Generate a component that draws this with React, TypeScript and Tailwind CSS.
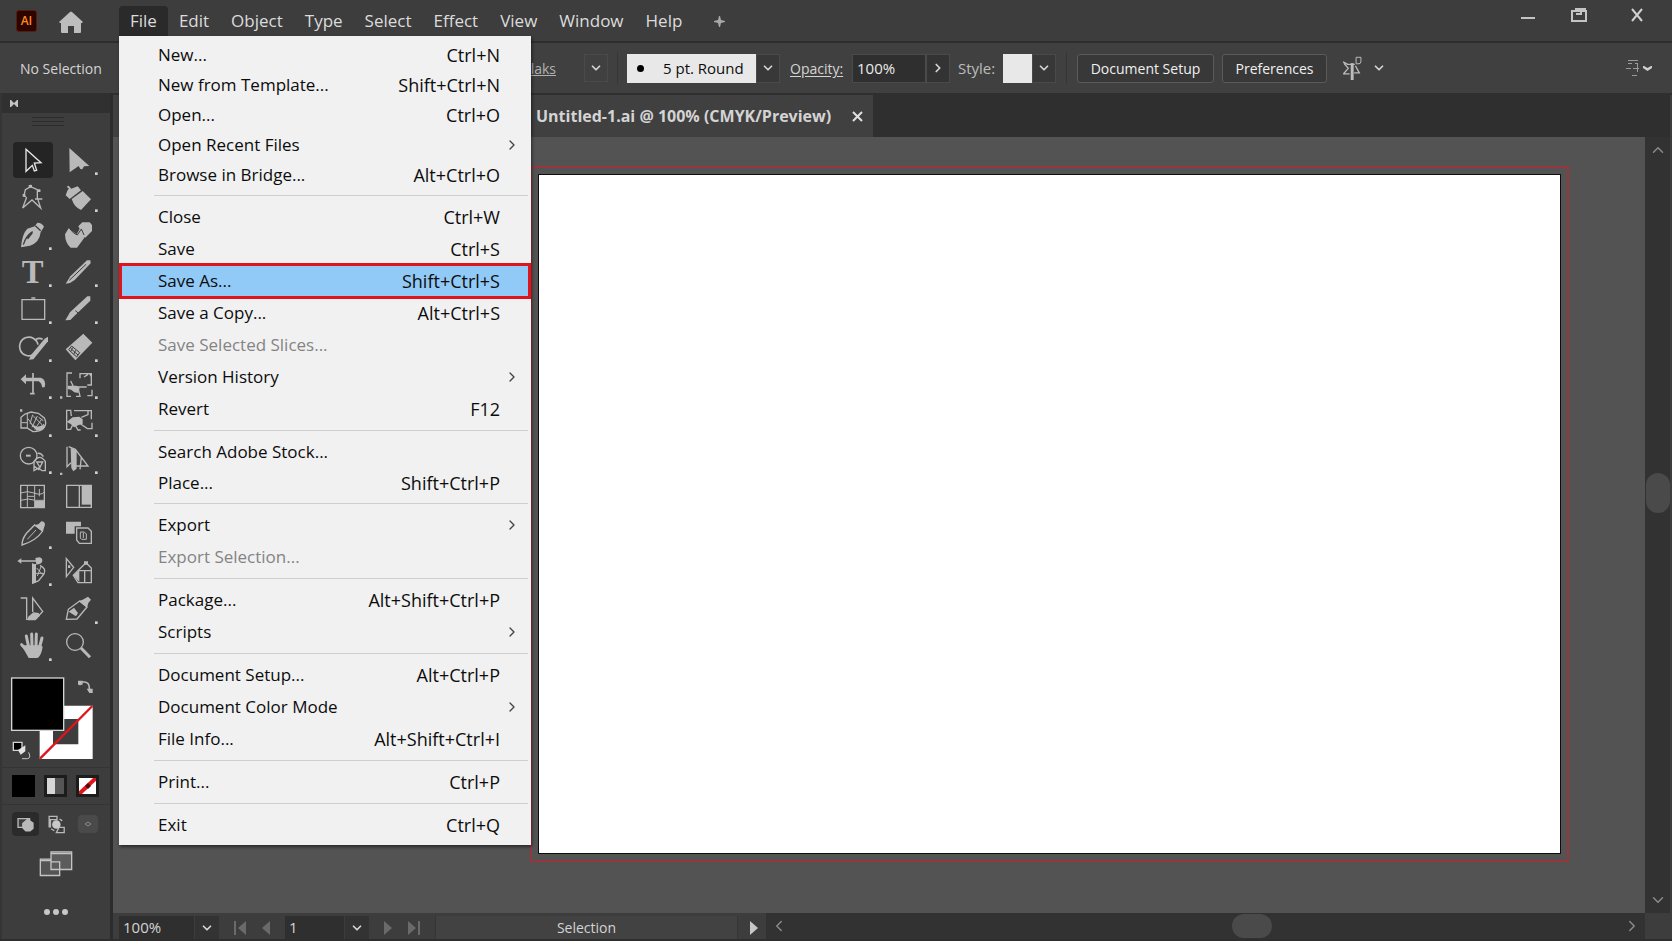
import type { ReactNode } from 'react';
import { ChevronDown, ChevronLeft, ChevronRight, ChevronUp } from 'lucide-react';
import clsx from 'clsx';

type MenuItem = {
  label: string;
  keys?: string;
  sub?: boolean;
  disabled?: boolean;
  active?: boolean;
};

type MenuGroup = {
  row: string;
  items: MenuItem[];
};

type Tool = {
  name: string;
  y: number; // top of the icon's own viewBox
  more?: boolean;
  selected?: boolean;
  art: ReactNode;
};

const menus = ['Edit', 'Object', 'Type', 'Select', 'Effect', 'View', 'Window', 'Help'];

const fileMenu: MenuGroup[] = [
  {
    row: 'h-[30px]',
    items: [
      { label: 'New...', keys: 'Ctrl+N' },
      { label: 'New from Template...', keys: 'Shift+Ctrl+N' },
      { label: 'Open...', keys: 'Ctrl+O' },
      { label: 'Open Recent Files', sub: true },
      { label: 'Browse in Bridge...', keys: 'Alt+Ctrl+O' },
    ],
  },
  {
    row: 'h-8',
    items: [
      { label: 'Close', keys: 'Ctrl+W' },
      { label: 'Save', keys: 'Ctrl+S' },
      { label: 'Save As...', keys: 'Shift+Ctrl+S', active: true },
      { label: 'Save a Copy...', keys: 'Alt+Ctrl+S' },
      { label: 'Save Selected Slices...', disabled: true },
      { label: 'Version History', sub: true },
      { label: 'Revert', keys: 'F12' },
    ],
  },
  {
    row: 'h-[31px]',
    items: [{ label: 'Search Adobe Stock...' }, { label: 'Place...', keys: 'Shift+Ctrl+P' }],
  },
  {
    row: 'h-8',
    items: [
      { label: 'Export', sub: true },
      { label: 'Export Selection...', disabled: true },
    ],
  },
  {
    row: 'h-8',
    items: [
      { label: 'Package...', keys: 'Alt+Shift+Ctrl+P' },
      { label: 'Scripts', sub: true },
    ],
  },
  {
    row: 'h-8',
    items: [
      { label: 'Document Setup...', keys: 'Alt+Ctrl+P' },
      { label: 'Document Color Mode', sub: true },
      { label: 'File Info...', keys: 'Alt+Shift+Ctrl+I' },
    ],
  },
  { row: 'h-8', items: [{ label: 'Print...', keys: 'Ctrl+P' }] },
  { row: 'h-8', items: [{ label: 'Exit', keys: 'Ctrl+Q' }] },
];

const line = { fill: 'none', stroke: '#b9b9b9', strokeWidth: 4 };
const thin = { fill: 'none', stroke: '#b9b9b9', strokeWidth: 3 };
const dark = { fill: 'none', stroke: '#3d3d3d', strokeWidth: 4 };

// left and right column, top to bottom
const tools: [Tool, Tool][] = [
  [
    { name: 'Selection', y: 156, selected: true, art: <path {...line} stroke="#e6e6e6" d="M78 178l45 40-20 1 7 22-7 2-6-17-19 18z" /> },
    { name: 'Direct Selection', y: 156, more: true, art: <path d="M208 174l60 54-16 1-5 9-6-1-5-9-27 19z" /> },
  ],
  [
    {
      name: 'Magic Wand',
      y: 268,
      art: (
        <>
          <path {...line} d="M78 322l-6-4 4-18 16-9 20 9v24l10 31-26-24-28 24 12-32M105 328h22M92 285v8M112 303h9" />
          <path d="M86 286h10v8H86zM68 313h8v8h-8zM113 299h8v8h-8z" />
        </>
      ),
    },
    {
      name: 'Lasso',
      y: 268,
      more: true,
      art: (
        <>
          <path d="M200 291l6-3 8 9 19-7 10 12-34 26-12-11 6-16 4-4z" />
          <path d="M215 328l33-24 25 25-30 32q-20-8-28-33z" />
        </>
      ),
    },
  ],
  [
    {
      name: 'Pen',
      y: 380,
      more: true,
      art: (
        <>
          <path d="M63 471q3-40 19-56l22-7 8-11q14 0 20 12l-10 17q-4 32-32 40z" />
          <path {...dark} d="M70 463q8-26 28-39M106 406l16 15" />
          <path {...dark} strokeWidth="6" d="M82 445l14-18" />
        </>
      ),
    },
    {
      name: 'Curvature',
      y: 380,
      art: (
        <>
          <path d="M235 408l12-12h22l7 8v18l-20 20-10-14z" />
          <path d="M195 432l11-18 16 12 8 6 12-22 14 28-10 14-15 20h-19q-16-12-17-40z" />
          <path {...dark} strokeWidth="3" d="M210 416q10 14 22 18l12-18 8 18" />
        </>
      ),
    },
  ],
  [
    {
      name: 'Type',
      y: 493,
      more: true,
      art: (
        <text x="98" y="579" fontSize="98" fontWeight="bold" textAnchor="middle" fontFamily="Liberation Serif, serif">
          T
        </text>
      ),
    },
    {
      name: 'Line Segment',
      y: 493,
      more: true,
      art: (
        <>
          <path d="M197 582l14-22 50-48h10l1 9-48 50-14 9z" />
          <path {...dark} strokeWidth="3" d="M208 572l50-48" />
        </>
      ),
    },
  ],
  [
    { name: 'Rectangle', y: 3, more: true, art: <path {...line} d="M66 29h68v59H66zM94 24h12" /> },
    {
      name: 'Paintbrush',
      y: 3,
      more: true,
      art: (
        <>
          <path d="M196 91l14-24 52-48h9v13l-48 46-12 12z" />
          <path {...dark} strokeWidth="3" d="M226 62l12 10" />
        </>
      ),
    },
  ],
  [
    {
      name: 'Shaper',
      y: 116,
      more: true,
      art: (
        <>
          <path {...line} strokeWidth="5" d="M100 193a28 28 0 1 1 14-30M108 147q10-6 20 0" />
          <path d="M134 145l10-6v14l-44 54-13 1 6-14z" />
        </>
      ),
    },
    {
      name: 'Eraser',
      y: 116,
      more: true,
      art: (
        <>
          <path d="M197 177l53-47 27 27-51 53z" />
          <path {...dark} strokeWidth="3" d="M206 178l9-11 24 20-9 13zM212 174l22 20M218 172l-6 12M227 180l-6 12" />
        </>
      ),
    },
  ],
  [
    {
      name: 'Rotate',
      y: 225,
      more: true,
      art: (
        <>
          <path d="M62 265l16-15v10h44q18 6 12 29h-8q0-12-10-18H78v9z" />
          <path {...line} strokeWidth="5" d="M99 246v64M90 308h14" />
        </>
      ),
    },
    {
      name: 'Scale',
      y: 225,
      more: true,
      art: (
        <>
          <path {...line} d="M216 246h-15v70h12M240 262v-14h34v34h-12M276 296v18h-14M222 298h14l4 18h-12M264 250l-12 8M226 288h34M212 270l8 16" />
          <path d="M203 284h26l10 6-4 16-12-2-10-8-10-2zM180 316h7v7h-7zM266 248h9v12z" />
        </>
      ),
    },
  ],
  [
    {
      name: 'Width',
      y: 340,
      more: true,
      art: (
        <>
          <path {...line} d="M63 380v32h18l18 11q24 0 34-13 8-14 0-28l-18-14-22-4-18 6z" />
          <path {...thin} d="M82 368v44M64 396h18M90 400l8-28M96 410l16-34M104 416l22-32M110 418l22-18M84 384l18 26M100 376l26 26M116 380l14 10" />
          <path d="M92 400l18 20 20-4 6-14-24 6zM60 356h7v7h-7z" />
        </>
      ),
    },
    {
      name: 'Free Transform',
      y: 340,
      more: true,
      art: (
        <>
          <path {...line} d="M214 376l-2-17h-12v57h12l6-14M222 360h52v26M276 396v18h-14l-20-14M226 404l8 14h8M264 360v12l-20 8" />
          <path d="M200 394l18-14 20-2 10 8v14l-14 4-12 6-10-10z" />
        </>
      ),
    },
  ],
  [
    {
      name: 'Shape Builder',
      y: 453,
      more: true,
      art: (
        <>
          <circle {...line} cx="86" cy="497" r="25" />
          <path d="M78 494h14v6H78z" />
          <path {...line} d="M102 542v-28q16-24 34 0v28h-10l-10-8zM110 516h18l-8 16zM104 530l14 10" />
          <path {...line} d="M112 490q12-2 18 10" />
        </>
      ),
    },
    {
      name: 'Perspective Grid',
      y: 453,
      more: true,
      art: (
        <>
          <path {...line} d="M201 470v60l12-12M206 470l20 8 38 50h-44M244 502l-4 36" />
          <path d="M212 474l18 6v56l-10 8-6-10zM180 548h7v7h-7z" />
        </>
      ),
    },
  ],
  [
    {
      name: 'Mesh',
      y: -2,
      art: (
        <>
          <path {...line} d="M62 17h71v67H62z" />
          <path {...thin} d="M62 40q20-8 40 0t30-2M62 62q24-8 44 0h26M82 18v64M104 18v66M118 28v22M82 50h20" />
          <path d="M104 64h28v20h-28z" />
        </>
      ),
    },
    {
      name: 'Gradient',
      y: -2,
      art: (
        <>
          <path {...line} d="M200 17h74v66h-74zM238 17v66" />
          <path d="M245 19h28v56h-28z" />
        </>
      ),
    },
  ],
  [
    {
      name: 'Eyedropper',
      y: 110,
      more: true,
      art: (
        <>
          <path {...line} d="M66 197q0-18 14-36l24-24 24 18q-18 28-62 42z" />
          <path {...thin} d="M82 180l26-28" />
          <path d="M104 138l12-4 8-8q10 0 11 10l-7 22z" />
        </>
      ),
    },
    {
      name: 'Blend',
      y: 110,
      art: (
        <>
          <path d="M198 127h45v14h-19v22h-26z" />
          <path {...line} d="M230 146h34l10 10v36h-36l-8-10z" />
          <path {...thin} d="M241 158h12l6 6v16h-14l-4-4zM250 160v16" />
        </>
      ),
    },
  ],
  [
    {
      name: 'Symbol Sprayer',
      y: 223,
      more: true,
      art: (
        <>
          <path {...line} d="M58 247h56M98 254v60l18-8 16-20q8-16-12-26" />
          <path d="M52 247l12-8v16zM106 238l12-2q10 2 9 12-4 10-18 10zM96 256h12v56H96z" />
          <path {...thin} d="M110 268l18 20M124 262l-12 30M108 284h24" />
        </>
      ),
    },
    {
      name: 'Column Graph',
      y: 223,
      art: (
        <>
          <path {...line} d="M199 240v54l22-28zM220 290l38-38 16 16v44h-40z" />
          <path {...line} d="M236 276h38M254 276v36" />
          <path d="M220 290l18-16v36zM204 260h7v8h-7zM252 248h12v10h-12z" />
        </>
      ),
    },
  ],
  [
    {
      name: 'Artboard',
      y: 336,
      art: (
        <>
          <path {...line} d="M62 357h18v64h26l22-24-30-40v42" />
          <path d="M84 414l16-14 16 2 4 8-14 14H84z" />
        </>
      ),
    },
    {
      name: 'Slice',
      y: 336,
      more: true,
      art: (
        <>
          <path {...line} d="M199 421l6-30 34-25 22 18-30 36z" />
          <path d="M236 366l12-4 16-9 9 9-8 10-4 14zM206 398l16-12 12 16-6 10z" />
        </>
      ),
    },
  ],
  [
    {
      name: 'Hand',
      y: 448,
      more: true,
      art: (
        <>
          <path d="M80 500h42l6 4q-4 28-16 34H86q-8-14-22-38z" />
          <path {...line} strokeWidth="9" strokeLinecap="round" d="M86 506l-7-34M96 504l-1-38M108 504l1-38M118 508l8-30M82 516l-17-18" />
        </>
      ),
    },
    {
      name: 'Zoom',
      y: 448,
      art: (
        <>
          <circle {...line} cx="225" cy="490" r="25" />
          <path {...line} strokeWidth="9" d="M243 508l27 28" />
        </>
      ),
    },
  ],
];

const ToolButton = ({ tool, left }: { tool: Tool; left: number }) => (
  <button aria-label={tool.name} className="flex items-center justify-center">
    <span className={clsx('flex justify-center w-10 h-9 rounded-sm', tool.selected && 'bg-[#242424]')}>
      <svg viewBox={`${left} ${tool.y} 138 108`} className="w-[46px] h-9 shrink-0 overflow-visible fill-[#b9b9b9]">
        {tool.art}
        {tool.more && <rect x={left + 117} y={tool.y + 91} width="8" height="8" fill="#d0d0d0" />}
      </svg>
    </span>
  </button>
);

const ToolPanel = () => (
  <aside className="w-[110px] shrink-0 flex flex-col bg-[#3d3d3d] border-l-2 border-[#353535]">
    <div className="h-5 flex items-center pl-2 bg-[#303030]">
      <svg viewBox="0 0 8 7" className="w-2 h-[7px] fill-[#c4c4c4]">
        <path d="M0 0h1l3 3 3-3h1v7H7L4 4 1 7H0z" />
      </svg>
    </div>
    <div className="h-7 flex flex-col items-center gap-[3px] pt-1 pr-4">
      <span className="w-8 h-px bg-[#2c2c2c]" />
      <span className="w-8 h-px bg-[#2c2c2c]" />
      <span className="w-8 h-px bg-[#2c2c2c]" />
    </div>
    <div className="grid grid-cols-2 auto-rows-fr h-[524px] pl-2 pr-2">
      {tools.map(([a, b]) => (
        <div key={a.name} className="contents">
          <ToolButton tool={a} left={30} />
          <ToolButton tool={b} left={168} />
        </div>
      ))}
    </div>

    {/* fill and stroke */}
    <svg viewBox="0 15 318 306" className="w-[106px] h-[102px]">
      <path fillRule="evenodd" fill="#fff" d="M113 137h159v160H113zM153 177v76h76v-76z" />
      <path d="M114 296L271 138" stroke="#e0141c" strokeWidth="7" />
      <rect x="29" y="54" width="156" height="157" fill="#000" stroke="#d4d4d4" strokeWidth="4" />
      <path d="M234 76V66h14q14 2 14 18v6" fill="none" stroke="#b9b9b9" strokeWidth="5" />
      <path d="M228 62h14v12h-14zM254 86h18v13h-10z" fill="#b9b9b9" />
      <path d="M34 247h26v24H34z" fill="#000" stroke="#d4d4d4" strokeWidth="4" />
      <path d="M48 270l22-14v18l-14 10z" fill="#e4e4e4" />
      <path d="M80 277q8 18-4 19H60" fill="none" stroke="#c4c4c4" strokeWidth="3" />
    </svg>
    <div className="flex gap-[9px] h-[38px] pl-[10px] items-center border-y border-[#343434]">
      <button aria-label="Color" className="w-[23px] h-[22px] bg-black" />
      <button aria-label="Gradient" className="w-[23px] h-[22px] flex border-[3px] border-[#1c1c1c]">
        <span className="w-2 h-full bg-[#d6d6d6]" />
        <span className="flex-1 h-full bg-[#555]" />
      </button>
      <button aria-label="None" className="w-[23px] h-[22px] border-[3px] border-[#1c1c1c] bg-white">
        <svg viewBox="0 0 17 16" className="w-full h-full">
          <path d="M0 16L17 0" stroke="#e0141c" strokeWidth="4" />
          <path d="M6 8l3-3 3 3-3 3z" fill="#5a0a0a" />
        </svg>
      </button>
    </div>
    <div className="flex gap-2 h-[38px] pl-[10px] items-center">
      <button aria-label="Draw Normal" className="w-[27px] h-6 flex items-center justify-center rounded-sm bg-[#2b2b2b]">
        <svg viewBox="50 466 56 52" className="w-[19px] h-[18px]">
          <path d="M56 476h34v26H56z" fill="#3d3d3d" stroke="#b9b9b9" strokeWidth="4" />
          <path d="M68 490l16-14 18 12v18l-10 8H78l-10-10z" fill="#b9b9b9" />
        </svg>
      </button>
      <button aria-label="Draw Behind" className="w-[23px] h-6 flex items-center">
        <svg viewBox="140 466 60 58" className="w-5 h-[19px]">
          <path d="M146 470h24v10h-20v22h-4zM176 504h16v16h-24z" fill="none" stroke="#b9b9b9" strokeWidth="4" />
          <circle cx="168" cy="495" r="13" fill="#c8c8c8" />
          <path d="M178 478l8 6M152 508l10 6" stroke="#b9b9b9" strokeWidth="4" />
        </svg>
      </button>
      <button aria-label="Draw Inside" className="w-5 h-[18px] flex items-center justify-center rounded-sm bg-[#4a4a4a]">
        <svg viewBox="0 0 8 6" className="w-2 h-[6px]">
          <path d="M1 3l3-2 3 2-3 2z" fill="none" stroke="#888" strokeWidth="1" />
        </svg>
      </button>
    </div>
    <button aria-label="Screen Mode" className="flex justify-center mt-[7px]">
      <svg viewBox="116 570 102 80" className="w-[34px] h-[27px]">
        <path d="M120 597h58v49h-58z" fill="#555" stroke="#c4c4c4" strokeWidth="4" />
        <path d="M152 575h62v53h-62z" fill="#5c5c5c" stroke="#c4c4c4" strokeWidth="4" />
        <path d="M152 580h62M120 601h32M152 605h26v23" fill="none" stroke="#c4c4c4" strokeWidth="4" />
      </svg>
    </button>
    <button aria-label="Edit Toolbar" className="flex justify-center gap-[3px] mt-8">
      <span className="size-[6px] rounded-full bg-[#c8c8c8]" />
      <span className="size-[6px] rounded-full bg-[#c8c8c8]" />
      <span className="size-[6px] rounded-full bg-[#c8c8c8]" />
    </button>
  </aside>
);

const FileMenu = () => (
  <div
    role="menu"
    aria-label="File"
    className="absolute left-0 top-full z-50 w-[412px] py-1 bg-[#f1f1f1] text-[17px] text-[#0c0c0c] shadow-[1px_2px_3px_rgba(0,0,0,0.5)]"
  >
    {fileMenu.map((group, i) => (
      <div key={i}>
        {i > 0 && <hr className="my-[5px] ml-[35px] mr-[3px] border-[#cfcfcf]" />}
        {group.items.map((item) => (
          <button
            key={item.label}
            role="menuitem"
            disabled={item.disabled}
            className={clsx(
              'relative flex w-full items-center justify-between',
              item.active ? 'h-9 -my-[2px] pl-9 pr-7 border-[3px] border-[#e0141c] bg-[#91c9f7]' : clsx(group.row, 'pl-[39px] pr-[31px]'),
              item.disabled && 'text-[#848484]',
            )}
          >
            <span>{item.label}</span>
            {item.keys && <span className="text-[18px]">{item.keys}</span>}
            {item.sub && <ChevronRight className="absolute right-[11px] size-4 text-[#444]" strokeWidth={2} />}
          </button>
        ))}
      </div>
    ))}
  </div>
);

const MenuBar = () => (
  <header className="flex items-start h-[43px] text-[17px] leading-[26px] text-[#dcdcdc] bg-[#3d3d3d] border-b-2 border-[#2e2e2e]">
    <span className="mt-[10px] ml-4 w-[21px] h-[22px] flex items-center justify-center rounded-[3px] border border-[#5a1c08] bg-[#2c0400] text-[12px] font-semibold text-[#ff8a1c]">
      AI
    </span>
    <button aria-label="Home" className="mt-[11px] ml-[22px] mr-9">
      <svg viewBox="0 0 24 22" className="w-6 h-[22px] fill-[#bdbdbd]">
        <path d="M11 1q1-1 2 0l11 10-1 1h-1v9q0 1-1 1h-6v-7H9v7H3q-1 0-1-1v-9H1l-1-1z" />
      </svg>
    </button>
    <nav className="flex pt-[6px]">
      <div className="relative">
        <button className="h-[30px] px-[11px] rounded-t bg-[#2a2a2a]">File</button>
        <FileMenu />
      </div>
      {menus.map((m) => (
        <button key={m} className="h-[30px] px-[11px]">
          {m}
        </button>
      ))}
    </nav>
    <button aria-label="Add workspace" className="mt-4 ml-[21px]">
      <svg viewBox="0 0 11 11" className="size-[11px] fill-[#a8a8a8]">
        <path d="M5 0h1l1 4 4 1v1L7 7l-1 4H5L4 7 0 6V5l4-1z" />
      </svg>
    </button>
    <div className="ml-auto flex gap-9 mt-2 mr-[29px]">
      <button aria-label="Minimize" className="h-4 pt-[9px] flex">
        <span className="w-[14px] h-[2px] bg-[#c4c4c4]" />
      </button>
      <button aria-label="Restore" className="h-4 flex">
        <svg viewBox="0 0 16 14" className="w-4 h-[14px]" fill="none" stroke="#c4c4c4" strokeWidth="2">
          <path d="M1 3h14v10H1zM5 3V1h9v2M10 1v5H5" />
        </svg>
      </button>
      <button aria-label="Close" className="h-4 ml-2 flex">
        <svg viewBox="0 0 12 14" className="w-3 h-[14px]" fill="none" stroke="#d0d0d0" strokeWidth="2">
          <path d="M1 1l10 12M11 1L1 13" />
        </svg>
      </button>
    </div>
  </header>
);

const ControlBar = () => (
  <div className="flex items-center h-[52px] text-[14px] text-[#d4d4d4] bg-[#404040] border-b-2 border-[#2e2e2e]">
    <span className="pl-5 w-[400px]">No Selection</span>
    <button className="ml-[84px] w-[100px] pr-[28px] text-right underline text-[#b0b0b0]">inlaks</button>
    <button aria-label="Width profile" className="w-6 h-7 flex items-center justify-center border border-[#4a4a4a]">
      <ChevronDown className="size-[14px]" strokeWidth={3} />
    </button>
    <span className="w-px h-8 mx-[9px] bg-[#353535]" />
    <label className="relative flex items-center h-[29px]">
      <span className="absolute left-[10px] size-[7px] rounded-full bg-black" />
      <select aria-label="Brush" className="appearance-none w-[129px] h-full pl-9 bg-[#e8e8e8] text-[15px] text-[#0c0c0c]">
        <option>5 pt. Round</option>
      </select>
      <span className="w-6 h-full flex items-center justify-center border border-[#4a4a4a] bg-[#383838]">
        <ChevronDown className="size-[14px]" strokeWidth={3} />
      </span>
    </label>
    <label htmlFor="opacity" className="ml-[10px] w-[54px] underline underline-offset-2">
      Opacity:
    </label>
    <input id="opacity" defaultValue="100%" className="ml-2 w-[74px] h-[29px] pl-1 text-[15px] border border-[#4a4a4a] bg-[#2f2f2f] text-[#ececec]" />
    <button aria-label="Opacity slider" className="w-6 h-[29px] flex items-center justify-center border border-[#4a4a4a] bg-[#333]">
      <ChevronRight className="size-[14px]" strokeWidth={3} />
    </button>
    <span className="ml-2 w-[45px] text-[15px] text-[#bcbcbc]">Style:</span>
    <button aria-label="Graphic style" className="flex h-[29px]">
      <span className="w-[29px] h-full bg-[#e8e8e8]" />
      <span className="w-6 h-full flex items-center justify-center border border-[#4a4a4a] bg-[#383838]">
        <ChevronDown className="size-[14px]" strokeWidth={3} />
      </span>
    </button>
    <span className="w-px h-8 mx-[10px] bg-[#353535]" />
    <button className="w-[137px] h-[29px] rounded-[3px] border border-[#5a5a5a] bg-[#383838] text-[#f0f0f0]">Document Setup</button>
    <button className="ml-2 w-[105px] h-[29px] rounded-[3px] border border-[#5a5a5a] bg-[#383838] text-[#f0f0f0]">Preferences</button>
    <button aria-label="Align" className="ml-[14px] flex items-center gap-2">
      <svg viewBox="706 166 62 74" className="w-[23px] h-6" fill="none" stroke="#bdbdbd" strokeWidth="4">
        <path d="M708 184l14 8h22M708 221h20M710 188l14 16-14 16M746 196l12 22h-16" />
        <path d="M736 188v52" strokeWidth="9" />
        <path d="M748 170h15v12q0 8-6 8h-9z" strokeWidth="3" />
      </svg>
      <ChevronDown className="size-[14px]" strokeWidth={3} />
    </button>
    <button aria-label="Panel options" className="ml-auto mr-5 flex items-center gap-[3px]">
      <svg viewBox="0 0 14 18" className="w-[14px] h-[18px]" fill="none" stroke="#9a9a9a" strokeWidth="1">
        <path d="M2 1.500h10M2 4.500h4M9 4.500h3M0 9.500h5M7 9.500h6M11.500 4v9M6 16.500h5" />
      </svg>
      <svg viewBox="0 0 9 5" className="w-[9px] h-[5px] fill-[#d0d0d0]">
        <path d="M0 0h1l3.500 2L8 0h1v2L4.500 5 0 2z" />
      </svg>
    </button>
  </div>
);

const StatusBar = () => (
  <footer className="flex items-center h-[26px] pt-[3px] text-[14px] text-[#d4d4d4] bg-[#3d3d3d]">
    <label className="ml-[6px] flex items-center h-full">
      <select aria-label="Zoom level" className="appearance-none w-[75px] h-full pl-1 text-[15px] bg-[#2f2f2f]">
        <option>100%</option>
      </select>
      <span className="ml-px w-6 h-full flex items-center justify-center bg-[#333]">
        <ChevronDown className="size-[14px]" strokeWidth={3} />
      </span>
    </label>
    <div className="flex items-center gap-4 px-[15px]">
      <button aria-label="First artboard">
        <svg viewBox="0 0 12 14" className="w-3 h-[14px] fill-[#6a6a6a]">
          <path d="M0 0h2v14H0zM12 0v14L4 7z" />
        </svg>
      </button>
      <button aria-label="Previous artboard">
        <svg viewBox="0 0 8 14" className="w-2 h-[14px] fill-[#6a6a6a]">
          <path d="M8 0v14L0 7z" />
        </svg>
      </button>
    </div>
    <label className="flex items-center h-full">
      <select aria-label="Artboard" className="appearance-none w-[59px] h-full pl-1 text-[15px] bg-[#2f2f2f]">
        <option>1</option>
      </select>
      <span className="ml-px w-6 h-full flex items-center justify-center bg-[#333]">
        <ChevronDown className="size-[14px]" strokeWidth={3} />
      </span>
    </label>
    <div className="flex items-center gap-4 px-[15px]">
      <button aria-label="Next artboard">
        <svg viewBox="0 0 8 14" className="w-2 h-[14px] fill-[#6a6a6a]">
          <path d="M0 0v14l8-7z" />
        </svg>
      </button>
      <button aria-label="Last artboard">
        <svg viewBox="0 0 12 14" className="w-3 h-[14px] fill-[#6a6a6a]">
          <path d="M0 0v14l8-7zM10 0h2v14h-2z" />
        </svg>
      </button>
    </div>
    <span className="w-[303px] h-full flex items-center justify-center border-x border-[#353535] bg-[#424242]">Selection</span>
    <button aria-label="Status options" className="pl-3 pr-2">
      <svg viewBox="0 0 8 14" className="w-2 h-[14px] fill-[#c8c8c8]">
        <path d="M0 0v14l8-7z" />
      </svg>
    </button>
    <div className="flex-1 self-stretch -mt-[3px] flex items-center px-1 bg-[#323232]">
      <ChevronLeft className="size-[18px] text-[#8a8a8a]" />
      <span className="w-10 h-6 ml-[51%] rounded-full bg-[#4a4a4a]" />
      <ChevronRight className="size-[18px] ml-auto text-[#8a8a8a]" />
    </div>
  </footer>
);

const App = () => {
  return (
    <div className="flex flex-col min-h-screen bg-[#3d3d3d] font-['Open_Sans','Noto_Sans',sans-serif] select-none">
      <MenuBar />
      <ControlBar />
      <main className="flex flex-1 -mt-[2px] border-b-2 border-[#2e2e2e]">
        <ToolPanel />
        <div className="flex-1 min-w-0 flex border-l-[3px] border-[#2c2c2c]">
          <section className="flex-1 min-w-0 flex flex-col">
            <div className="h-11 flex bg-[#2f2f2f] pr-7">
              <div className="flex items-center pl-[423px] pr-[10px] bg-[#404040] border-t-2 border-[#2f2f2f] text-[16px] font-bold text-[#d4d4d4]">
                Untitled-1.ai @ 100% (CMYK/Preview)
                <button aria-label="Close document" className="ml-[21px]">
                  <svg viewBox="0 0 11 11" className="size-[11px]" stroke="#e0e0e0" strokeWidth="2">
                    <path d="M1 1l9 9M10 1L1 10" />
                  </svg>
                </button>
              </div>
            </div>
            <div className="flex-1 flex bg-[#535353] pl-[417px] pr-[76px] pt-[29px] pb-[51px]">
              <div className="flex-1 flex p-[6px] border-2 border-[#94383d]">
                <div className="flex-1 bg-white border border-[#0c0c0c]" />
              </div>
            </div>
            <StatusBar />
          </section>
          <div className="w-[25px] mr-[2px] flex flex-col">
            <div className="h-11 bg-[#2f2f2f]" />
            <div className="flex-1 flex flex-col items-center justify-between py-1 bg-[#323232]">
              <ChevronUp className="size-[18px] text-[#8a8a8a]" />
              <span className="w-6 h-10 -mt-16 rounded-full bg-[#4a4a4a]" />
              <ChevronDown className="size-[18px] text-[#8a8a8a]" />
            </div>
            <div className="h-[26px]" />
          </div>
        </div>
      </main>
    </div>
  );
};

export default App;
